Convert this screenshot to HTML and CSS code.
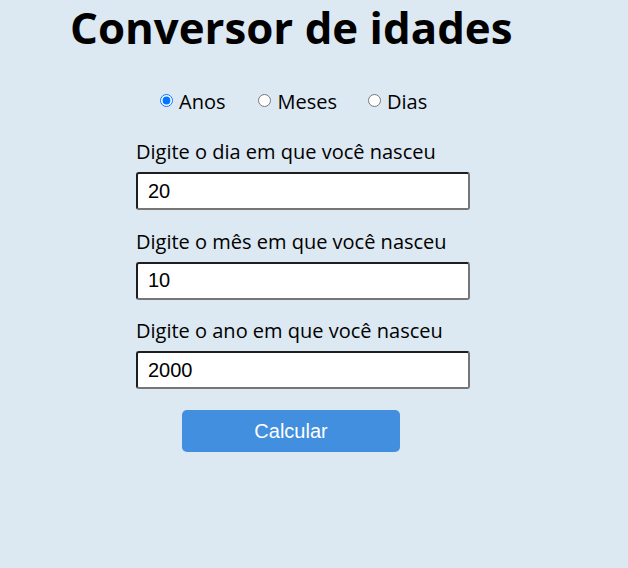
FILE: index.html
```html
<!DOCTYPE html>
<html lang="pt">
<head>
<meta charset="utf-8">
<title>Conversor de idades</title>
<link rel="stylesheet" href="styles.css">
</head>
<body>
<div class="container">
  <h1 class="title">Conversor de idades</h1>
  <div class="options">
    <label class="option"><input type="radio" name="unit" class="radio" checked><span>Anos</span></label>
    <label class="option"><input type="radio" name="unit" class="radio"><span>Meses</span></label>
    <label class="option"><input type="radio" name="unit" class="radio"><span>Dias</span></label>
  </div>
  <div class="form">
    <div class="group first">
      <label class="label" for="dia">Digite o dia em que você nasceu</label>
      <input class="field" id="dia" type="text" value="20">
    </div>
    <div class="group">
      <label class="label" for="mes">Digite o mês em que você nasceu</label>
      <input class="field" id="mes" type="text" value="10">
    </div>
    <div class="group">
      <label class="label" for="ano">Digite o ano em que você nasceu</label>
      <input class="field" id="ano" type="text" value="2000">
    </div>
  </div>
  <button class="btn" type="button">Calcular</button>
</div>
</body>
</html>
```
FILE: styles.css
```css
html, body {
  margin: 0;
  padding: 0;
  background: #dce8f2;
}
body {
  font-family: "Open Sans", "DejaVu Sans", sans-serif;
  color: #000;
  width: 628px;
  height: 568px;
}
.container {
  width: 480px;
  margin-left: 70px;
}
.title {
  margin: 0;
  font-size: 43.8px;
  line-height: 55px;
  font-weight: 700;
  white-space: nowrap;
}
.options {
  margin-top: 33px;
  display: flex;
  justify-content: flex-start;
  padding-left: 90px;
  height: 27px;
  font-size: 20px;
}
.option {
  display: inline-flex;
  align-items: center;
  margin-right: 33px;
}
.option + .option {
  margin-right: 31px;
}
.radio {
  width: 13px;
  height: 13px;
  margin: 0 6px 0 0;
  position: relative;
  top: -1px;
}
.form {
  margin-left: 66px;
}
.group {
  margin-top: 17.5px;
}
.group.first {
  margin-top: 23px;
}
.label {
  display: block;
  font-size: 20px;
  line-height: 27px;
  margin-bottom: 7px;
}
.field {
  display: block;
  box-sizing: border-box;
  width: 334px;
  height: 38px;
  padding: 0 10px;
  font-family: "Liberation Sans", Arial, sans-serif;
  font-size: 20px;
  color: #000;
  background: #fff;
  border: 2px solid;
  border-color: #1e1e1e #767676 #767676 #1e1e1e;
  border-radius: 3px;
}
.btn {
  display: block;
  margin: 21px 0 0 112px;
  width: 218px;
  height: 42px;
  border: none;
  border-radius: 5px;
  background: #418fde;
  color: #fff;
  font-family: "Liberation Sans", Arial, sans-serif;
  font-size: 20px;
  cursor: pointer;
}
```
